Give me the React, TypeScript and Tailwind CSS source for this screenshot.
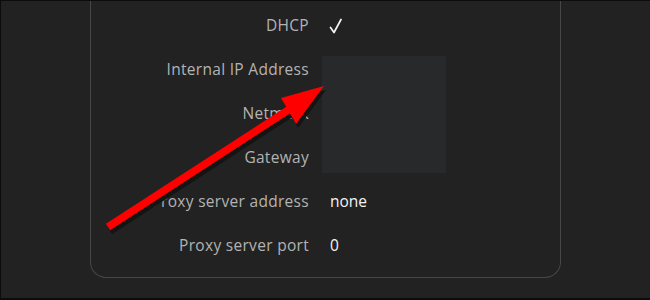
import React from "react";

const rows: [string, string][] = [
  ["DHCP", "✓"],
  ["Internal IP Address", ""],
  ["Netmask", ""],
  ["Gateway", ""],
  ["Proxy server address", "none"],
  ["Proxy server port", "0"],
];

export default function App() {
  return (
    <div
      className="relative w-[650px] h-[300px] overflow-hidden bg-[#222222] border-l border-t border-b-2 border-[#0c0c0c]"
      style={{ fontFamily: "'Open Sans', Lato, sans-serif" }}
    >
      <div className="px-[89px]">
        <div className="rounded-b-[16px] border border-t-0 border-[#474747] pt-[3px] pb-[9px]">
          {rows.map(([label, value]) => (
            <div key={label} className="grid grid-cols-[218px_1fr] gap-[21px] h-[44px] items-center">
              <div className="text-right text-[15.5px] text-[#b3b3b3] tracking-[0.3px]">{label}</div>
              {value === "✓" ? (
                <svg width="14" height="16" viewBox="0 0 14 16" className="ml-[-1px]" aria-label="✓">
                  <path d="M1.5 9.5 L5 14.5 L12 1.5" fill="none" stroke="#f4f4f4" strokeWidth="1.7" strokeLinecap="round" strokeLinejoin="round" />
                </svg>
              ) : (
                <div className="text-[15.5px] text-[#f4f4f4]">{value}</div>
              )}
            </div>
          ))}
        </div>
      </div>
      <div className="absolute left-[321px] top-[55px] w-[124px] h-[117px] bg-[#28292a]" />
      <svg className="absolute left-0 top-0" width="650" height="300" viewBox="0 0 650 300">
        <g transform="translate(2,4)" fill="#141414" stroke="#141414">
          <line x1="107" y1="226" x2="292" y2="106" strokeWidth="7.5" />
          <polygon points="323,85 280,97 295,123" strokeWidth="0" />
        </g>
        <g fill="#ff0000" stroke="#ff0000">
          <line x1="107" y1="226" x2="292" y2="106" strokeWidth="7.5" />
          <polygon points="323,85 280,97 295,123" strokeWidth="0" />
        </g>
      </svg>
    </div>
  );
}
